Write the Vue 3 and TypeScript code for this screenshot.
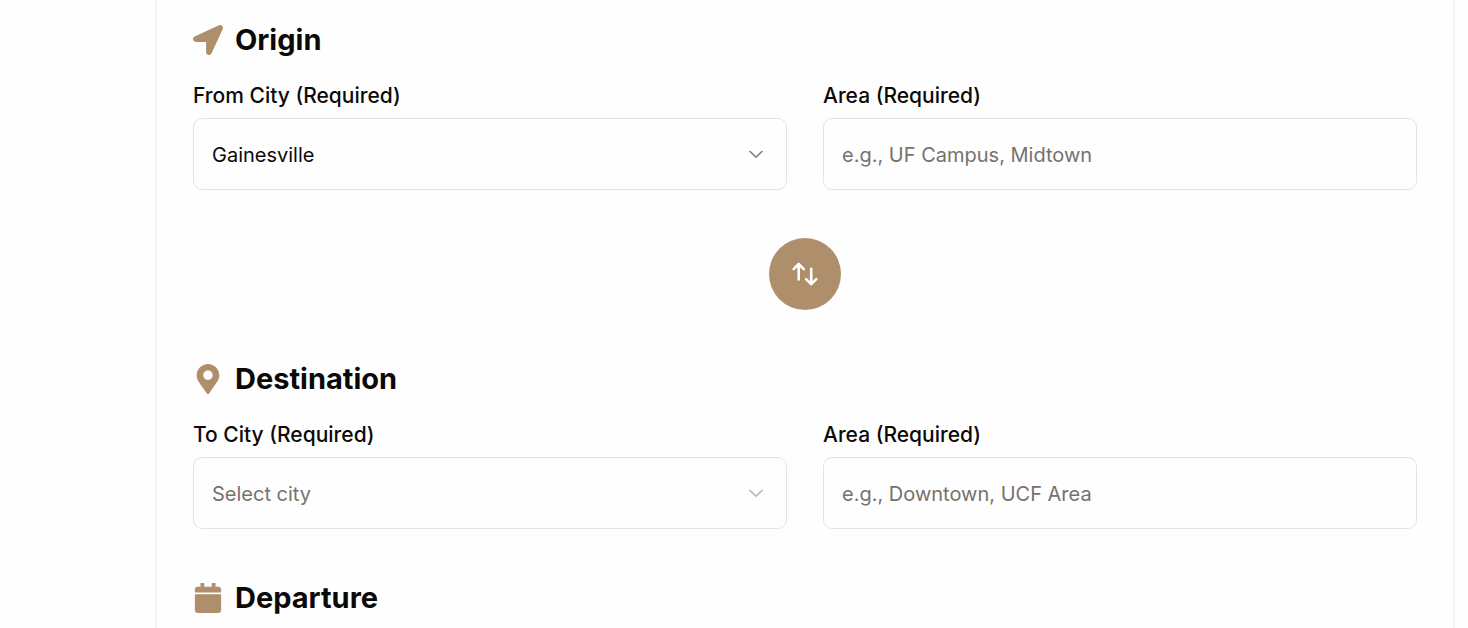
<script setup lang="ts">
import { ref } from 'vue'

const cities = ['Gainesville', 'Orlando', 'Tampa', 'Miami', 'Jacksonville', 'Tallahassee']

const fromCity = ref('Gainesville')
const fromArea = ref('')
const toCity = ref('')
const toArea = ref('')

function swap(): void {
  const city = fromCity.value
  const area = fromArea.value
  fromCity.value = toCity.value
  fromArea.value = toArea.value
  toCity.value = city
  toArea.value = area
}
</script>

<template>
  <main class="page">
    <form class="card" @submit.prevent>
      <section class="group">
        <h2 class="heading">
          <svg class="heading-icon" viewBox="0 0 512 512" aria-hidden="true">
            <path d="M444.52 3.52L28.74 195.42c-47.97 22.39-31.98 92.75 19.19 92.75h175.91v175.91c0 51.17 70.36 67.17 92.75 19.19l191.9-415.78c15.99-38.39-25.59-79.97-63.97-63.95z" />
          </svg>
          Origin
        </h2>
        <div class="fields">
          <div class="field">
            <label for="from-city">From City (Required)</label>
            <div class="select-wrap">
              <select id="from-city" v-model="fromCity" class="control" :class="{ empty: !fromCity }">
                <option value="" disabled>Select city</option>
                <option v-for="city in cities" :key="city" :value="city">{{ city }}</option>
              </select>
              <svg class="chevron" viewBox="0 0 18 18" aria-hidden="true"><path d="M2.5 6 9 12.2 15.5 6" /></svg>
            </div>
          </div>
          <div class="field">
            <label for="from-area">Area (Required)</label>
            <input id="from-area" v-model="fromArea" class="control" type="text" placeholder="e.g., UF Campus, Midtown" />
          </div>
        </div>
      </section>

      <button class="swap" type="button" aria-label="Swap origin and destination" @click="swap">
        <svg viewBox="0 0 36 36" aria-hidden="true">
          <path d="M11.7 23.5V8M6.6 13.1 11.7 8l5.1 5.1M24.2 12.7v15.5M19.1 23.1l5.1 5.1 5.1-5.1" />
        </svg>
      </button>

      <section class="group">
        <h2 class="heading">
          <svg class="heading-icon" viewBox="-64 0 512 512" aria-hidden="true">
            <path d="M172.268 501.67C26.97 291.031 0 269.413 0 192 0 85.961 85.961 0 192 0s192 85.961 192 192c0 77.413-26.97 99.031-172.268 309.67-9.535 13.774-29.93 13.773-39.464 0zM192 272c44.183 0 80-35.817 80-80s-35.817-80-80-80-80 35.817-80 80 35.817 80 80 80z" />
          </svg>
          Destination
        </h2>
        <div class="fields">
          <div class="field">
            <label for="to-city">To City (Required)</label>
            <div class="select-wrap">
              <select id="to-city" v-model="toCity" class="control" :class="{ empty: !toCity }">
                <option value="" disabled>Select city</option>
                <option v-for="city in cities" :key="city" :value="city">{{ city }}</option>
              </select>
              <svg class="chevron" viewBox="0 0 18 18" aria-hidden="true"><path d="M2.5 6 9 12.2 15.5 6" /></svg>
            </div>
          </div>
          <div class="field">
            <label for="to-area">Area (Required)</label>
            <input id="to-area" v-model="toArea" class="control" type="text" placeholder="e.g., Downtown, UCF Area" />
          </div>
        </div>
      </section>

      <section class="group">
        <h2 class="heading">
          <svg class="heading-icon" viewBox="-32 0 512 512" aria-hidden="true">
            <path d="M12 192h424c6.6 0 12 5.4 12 12v260c0 26.5-21.5 48-48 48H48c-26.5 0-48-21.5-48-48V204c0-6.6 5.4-12 12-12zm436-44v-36c0-26.5-21.5-48-48-48h-48V12c0-6.6-5.4-12-12-12h-40c-6.6 0-12 5.4-12 12v52H160V12c0-6.6-5.4-12-12-12h-40c-6.6 0-12 5.4-12 12v52H48C21.5 64 0 85.5 0 112v36c0 6.6 5.4 12 12 12h424c6.6 0 12-5.4 12-12z" />
          </svg>
          Departure
        </h2>
      </section>
    </form>
  </main>
</template>

<style>
body {
  margin: 0;
  background: #fefefe;
}
</style>

<style scoped>
.page {
  box-sizing: border-box;
  min-height: 100vh;
  padding: 0 14px 0 156px;
  display: flex;
  font-family: Inter, "Liberation Sans", sans-serif;
  color: #0c0a09;
}

.card {
  box-sizing: border-box;
  flex: 1;
  display: flex;
  flex-direction: column;
  gap: 48px;
  padding: 19px 36px 8px;
  border: solid #f0f0f0;
  border-width: 0 1px;
  background: #fefefe;
  box-shadow: 0 0 3px rgba(0, 0, 0, 0.06);
}

.heading {
  display: flex;
  align-items: center;
  gap: 12px;
  margin: 0;
  font-size: 29px;
  line-height: 42px;
  font-weight: 700;
}

.heading-icon {
  width: 30px;
  height: 30px;
  fill: #ae8e6b;
}

.fields {
  display: grid;
  grid-template-columns: 1fr 1fr;
  gap: 36px;
  margin-top: 20px;
}

.field {
  display: flex;
  flex-direction: column;
  gap: 7px;
  min-width: 0;
}

label {
  font-size: 21px;
  line-height: 30px;
  font-weight: 500;
}

.select-wrap {
  position: relative;
}

.control {
  box-sizing: border-box;
  display: block;
  width: 100%;
  height: 72px;
  margin: 0;
  padding: 2px 18px 0;
  border: 1px solid #e4e4e4;
  border-radius: 9px;
  background: #fefefe;
  color: #0c0a09;
  font: 400 20px/30px Inter, "Liberation Sans", sans-serif;
  appearance: none;
}

.control.empty,
.control::placeholder {
  color: #78716c;
  opacity: 1;
}

.chevron {
  position: absolute;
  top: 27px;
  right: 22px;
  width: 18px;
  height: 18px;
  fill: none;
  stroke: #858585;
  stroke-width: 1.7;
  pointer-events: none;
}

.empty + .chevron {
  stroke: #b9b7b5;
}

.swap {
  align-self: center;
  display: flex;
  align-items: center;
  justify-content: center;
  width: 72px;
  height: 72px;
  padding: 0;
  border: 0;
  border-radius: 50%;
  background: #ae8e6b;
  cursor: pointer;
}

.swap svg {
  width: 36px;
  height: 36px;
  fill: none;
  stroke: #fff;
  stroke-width: 2.6;
  stroke-linecap: round;
  stroke-linejoin: round;
}
</style>
